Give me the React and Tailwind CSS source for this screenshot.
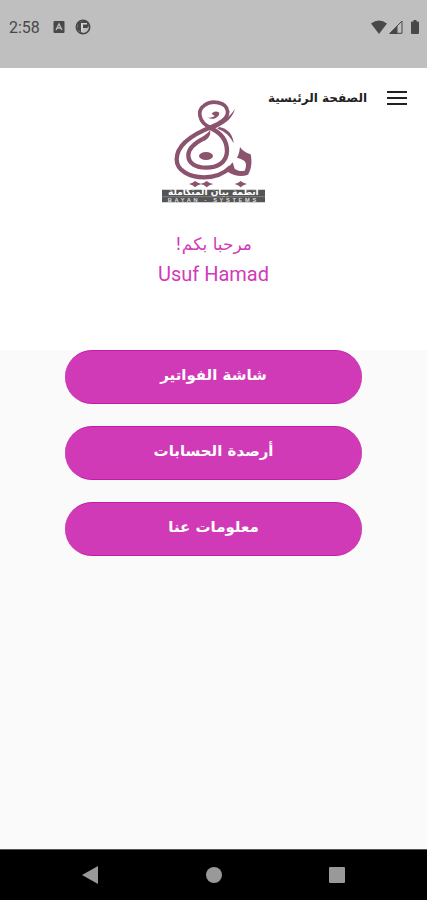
function StatusBar() {
  return (
    <div className="flex h-[68px] shrink-0 items-start justify-between bg-[#bfbfbf] pt-[17px] pr-2 pl-[9px] text-[#484848]">
      <div className="flex h-5 items-center">
        <span className="w-11 pt-px font-['Roboto',sans-serif] text-base">2:58</span>
        <svg className="mr-[10px] h-3 w-3" viewBox="0 0 12 12" aria-hidden="true">
          <rect x="0.500" width="11" height="12" rx="1" fill="currentColor" />
          <path d="M3 9 6 3l3 6M4 7h4" fill="none" stroke="#bfbfbf" strokeWidth="1.3" />
        </svg>
        <svg className="h-4 w-4" viewBox="0 0 16 16" aria-hidden="true">
          <circle cx="8" cy="8" r="6.7" fill="none" stroke="currentColor" strokeWidth="1.6" />
          <path d="M3 3 8 2h4l2 5-3 3-2-1v4l-3 1-4-4z" fill="currentColor" />
          <path d="M6 4h6v1.500H8V13H6z" fill="#d4d4d4" />
          <path d="M8 9h4l-3 4.500H7z" fill="#bfbfbf" />
        </svg>
      </div>
      <div className="flex h-5 items-center">
        <svg className="mr-[2px] h-[14px] w-4" viewBox="0 0 16 14" aria-hidden="true">
          <path d="M0 3.5Q8-2.5 16 3.5L8 14z" fill="currentColor" />
        </svg>
        <svg className="mr-2 h-[14px] w-[14px]" viewBox="0 0 14 14" aria-hidden="true">
          <path d="M1 13.3 13 1v12.3z" fill="none" stroke="currentColor" strokeWidth="1" />
          <path d="M0 14 8.500 5.500V14z" fill="currentColor" />
        </svg>
        <svg className="h-[14px] w-2" viewBox="0 0 8 14" aria-hidden="true">
          <path d="M2.500 0h3v1.500H7q1 0 1 1V13q0 1-1 1H1q-1 0-1-1V2.500q0-1 1-1h1.500z" fill="currentColor" />
        </svg>
      </div>
    </div>
  );
}

function Logo() {
  return (
    <svg className="h-[105px] w-[103px]" viewBox="24 12 309 315" role="img" aria-label="Bayan Systems">
      <g fill="none" stroke="#8c536f" strokeWidth="13">
        <path strokeWidth="11" d="M170 98C132 82 130 45 150 32C172 14 218 20 221 50C221 72 197 84 168 97" />
        <path d="M174 95C115 118 68 150 68 193C68 228 108 247 150 247C188 247 212 234 230 216" />
        <path d="M165 97C200 112 219 135 219 168C219 203 188 218 157 218C125 218 103 205 103 181C103 158 125 143 148 131" />
      </g>
      <g fill="#8c536f">
        <path d="M243 42C234 74 208 90 176 103L168 96C200 84 226 68 243 42Z" />
        <path d="M144 126C156 119 163 113 168 105C172 121 162 131 151 138Z" />
        <path d="M195 96C221 100 237 118 239 145C230 127 217 111 190 101Z" />
        <path d="M258 155C264 167 279 174 290 178C294 196 294 222 282 239C264 246 242 244 222 231L218 222L236 202L242 221C251 228 262 230 272 227C279 214 277 201 268 196C262 192 255 190 249 188C255 177 257 166 258 155Z" />
        <ellipse cx="156" cy="183" rx="21" ry="12" />
        <path d="M161 68C170 68 178 66 182 62L173 57C177 48 189 47 196 53C196 67 178 77 161 68Z" />
        <path d="M105 267Q117 264 123 258Q132 265 141 266Q151 265 158 258Q166 265 178 267Q165 270 158 277Q149 268 141 268Q131 269 123 277Q117 270 105 267ZM242 267Q254 264 260 258Q267 264 279 267Q267 270 260 277Q253 270 242 267Z" />
      </g>
      <path d="M24 284h309v38H24z" fill="#555" />
      <path d="M24 305h309" stroke="#999" strokeWidth="2" />
      <g fill="#fff" textAnchor="middle" fontWeight="700">
        <text x="178" y="300" fontSize="27" fontFamily="DejaVu Sans, sans-serif" direction="rtl">
          أنظمة بيان المتكاملة
        </text>
        <text x="178" y="320" fontSize="17" letterSpacing="8" fill="#ddd" fontFamily="Liberation Sans, sans-serif">
          BAYAN - SYSTEMS
        </text>
      </g>
    </svg>
  );
}

function Header() {
  return (
    <header className="grid h-[282px] shrink-0 grid-cols-1 grid-rows-[161px_auto] bg-white">
      <nav className="col-start-1 row-start-1 flex items-start gap-5 pt-4 pr-5">
        <button type="button" aria-label="القائمة" className="flex h-7 w-5 items-center">
          <svg className="h-[14px] w-5" viewBox="0 0 20 14" fill="#222" aria-hidden="true">
            <path d="M0 0h20v2H0zM0 6h20v2H0zM0 12h20v2H0z" />
          </svg>
        </button>
        <h1 className="text-xs leading-7 font-bold text-[#222]">الصفحة الرئيسية</h1>
      </nav>
      <div className="col-start-1 row-start-1 justify-self-center pt-[31px]">
        <Logo />
      </div>
      <div className="col-start-1 row-start-2 text-center text-[#d13ab7]">
        <p className="text-[17px] leading-[30px]">مرحبا بكم!</p>
        <p dir="ltr" className="font-['Roboto',sans-serif] text-xl leading-[30px]">Usuf Hamad</p>
      </div>
    </header>
  );
}

const actions = ["شاشة الفواتير", "أرصدة الحسابات", "معلومات عنا"];

function NavigationBar() {
  return (
    <div dir="ltr" className="flex h-[51px] shrink-0 items-center justify-between border-t border-[#555] bg-black px-20 text-[#999]">
      <button type="button" aria-label="Back">
        <svg className="h-5 w-5" viewBox="0 0 20 20" fill="currentColor" aria-hidden="true">
          <path d="M2 10 18 1v18z" />
        </svg>
      </button>
      <button type="button" aria-label="Home">
        <svg className="h-5 w-5" viewBox="0 0 20 20" fill="currentColor" aria-hidden="true">
          <circle cx="10" cy="10" r="8" />
        </svg>
      </button>
      <button type="button" aria-label="Recent apps">
        <svg className="h-5 w-5" viewBox="0 0 20 20" fill="currentColor" aria-hidden="true">
          <rect x="2" y="2" width="16" height="16" rx="1" />
        </svg>
      </button>
    </div>
  );
}

export default function App() {
  return (
    <div className="flex min-h-screen flex-col bg-[#fafafa] font-['DejaVu_Sans',sans-serif]">
      <StatusBar />
      <div dir="rtl" className="flex flex-1 flex-col">
        <Header />
        <main className="flex flex-1 flex-col gap-[22px] px-[65px]">
          {actions.map((label) => (
            <button
              key={label}
              type="button"
              className="h-[54px] rounded-full border-y border-[#c51baa] bg-[#d13ab7] pb-1 text-[15px] font-bold text-white"
            >
              {label}
            </button>
          ))}
        </main>
      </div>
      <NavigationBar />
    </div>
  );
}
